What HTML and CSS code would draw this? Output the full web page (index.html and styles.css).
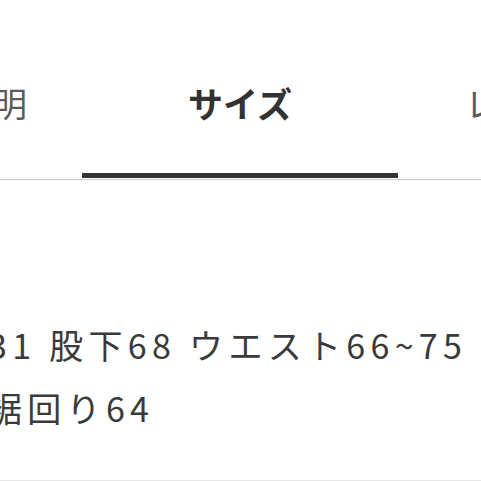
FILE: index.html
```html
<!DOCTYPE html>
<html lang="ja">
<head>
<meta charset="utf-8">
<link rel="stylesheet" href="styles.css">
</head>
<body>
<div class="screen">
  <nav class="tabs">
    <div class="tab tab-left"><span class="label">商品説明</span></div>
    <div class="tab tab-active"><span class="label">サイズ</span><span class="bar"></span></div>
    <div class="tab tab-right"><span class="label">レビュー</span></div>
  </nav>
  <section class="content">
    <p class="size-text">31 股下68 ウエスト66~75 裾回り64</p>
  </section>
</div>
</body>
</html>
```
FILE: styles.css
```css
html, body {
  margin: 0;
  padding: 0;
  background: #ffffff;
}
.screen {
  width: 481px;
  height: 481px;
  overflow: hidden;
  font-family: "Noto Sans CJK JP", "Noto Sans", sans-serif;
}
.tabs {
  display: flex;
  height: 179px;
  border-bottom: 1px solid #cdcdcd;
}
.tab {
  display: flex;
  flex-direction: column;
  box-sizing: border-box;
  min-width: 0;
}
.label {
  display: block;
  padding-top: 86px;
  font-size: 34px;
  line-height: 34px;
  white-space: nowrap;
  color: #5a5a5a;
}
.tab-left {
  flex: 0 0 82px;
  align-items: flex-end;
  padding-right: 55px;
}
.tab-active {
  flex: 0 0 316px;
  align-items: center;
}
.tab-active .label {
  font-weight: 700;
  font-size: 35px;
  color: #333333;
}
.tab-right {
  flex: 0 0 316px;
  align-items: flex-start;
  padding-left: 67px;
}
.bar {
  display: block;
  align-self: stretch;
  margin-top: auto;
  margin-bottom: 1px;
  height: 5px;
  background: #333333;
}
.content {
  box-sizing: border-box;
  height: 301px;
  padding-top: 133px;
  border-bottom: 1px solid #e6e6e6;
}
.size-text {
  margin: 0 0 0 -12px;
  width: 490px;
  font-size: 34px;
  line-height: 63px;
  letter-spacing: 5.3px;
  color: #3a3a3a;
}
```
